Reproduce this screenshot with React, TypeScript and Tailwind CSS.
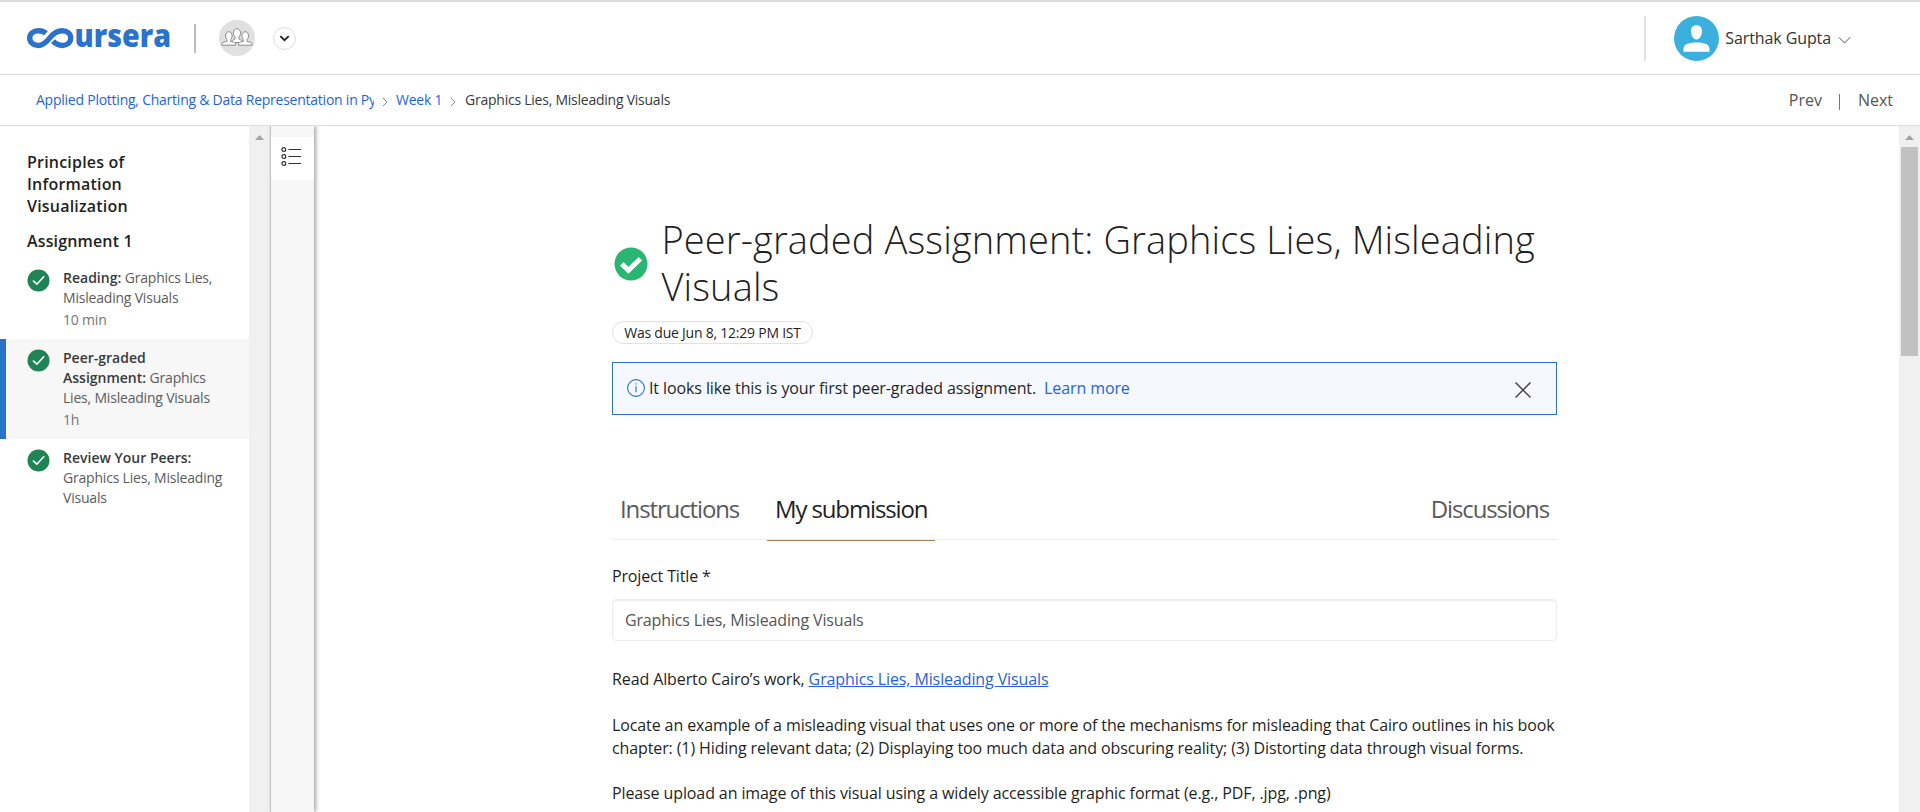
import React from "react";

function CourseraLogo() {
  return (
    <svg width="148" height="48" viewBox="26 12 148 48" className="block shrink-0 overflow-visible">
      <path
        d="M46 33.300C44 31.400 41.300 30.700 38.200 30.700C33.400 30.700 29.700 33.800 29.700 38C29.700 42.300 33.300 45.500 37.900 45.500C43 45.500 46.400 42.200 49.600 38.100C53 33.800 56.800 30.700 62.200 30.700C67.200 30.700 70.700 33.800 70.700 38C70.700 42.300 67.200 45.500 62.600 45.500C58.600 45.500 55.600 44 53 41.200"
        fill="none"
        stroke="#2a73cc"
        strokeWidth="5.400"
      />
      <text
        x="74.500"
        y="47.400"
        textLength="96.500"
        lengthAdjust="spacingAndGlyphs"
        fill="#2a73cc"
        className="font-['Open_Sans',sans-serif] text-[32px] font-extrabold"
      >
        ursera
      </text>
    </svg>
  );
}

function GroupIcon() {
  return (
    <svg width="32" height="20" viewBox="0 0 32 20" fill="#fff" stroke="#8a8a8a" strokeWidth="1" strokeLinejoin="round">
      <path d="M12.500 5C12.500 2.200 13.800 .8 16 .8S19.500 2.200 19.500 5C19.500 6.900 18.600 8.300 17.900 9V11C19 11.700 20.500 12 21 13V14.500H11V13C11.500 12 13 11.700 14.100 11V9C13.400 8.300 12.500 6.900 12.500 5Z" />
      <path d="M4.500 7.800C4.500 5.200 5.700 3.800 7.800 3.800S11.100 5.200 11.100 7.800C11.100 9.600 10.300 11 9.600 11.700V13.300C11.500 14 14 14 14.400 15.400V17.200H1V15.400C1.500 14 4.100 14 6 13.300V11.700C5.300 11 4.500 9.600 4.500 7.800Z" />
      <path d="M20.900 7.800C20.900 5.200 22.100 3.800 24.200 3.800S27.500 5.200 27.500 7.800C27.500 9.600 26.700 11 26 11.700V13.300C27.900 14 30.500 14 31 15.400V17.200H17.600V15.400C18 14 20.500 14 22.400 13.300V11.700C21.700 11 20.900 9.600 20.900 7.800Z" />
    </svg>
  );
}

function Avatar() {
  return (
    <svg width="45" height="45" viewBox="0 0 45 45" className="shrink-0">
      <circle cx="22.500" cy="22.500" r="22.500" fill="#3cb0dc" />
      <path
        fill="#fff"
        d="M22.500 9.300C26 9.300 28 11.600 28 15.300C28 19.600 25.500 23.600 22.500 23.600S17 19.600 17 15.300C17 11.600 19 9.300 22.500 9.300ZM9.500 35.800V33.200C9.500 28.400 14 26.400 22.500 26.400S35.500 28.400 35.500 33.200V35.800Z"
      />
    </svg>
  );
}

function Header() {
  return (
    <header className="flex h-[75px] shrink-0 items-start border-t-2 border-b border-t-[#dcdbe1] border-b-[#dedede]">
      <div className="ml-[26px] mt-[10px]">
        <CourseraLogo />
      </div>
      <div className="ml-[20px] mt-[22px] h-[29px] w-[2px] bg-[#bdbdbd]" />
      <div className="ml-[23px] mt-[18px] flex h-9 w-9 items-center justify-center rounded-full bg-[#e0e0e0]">
        <GroupIcon />
      </div>
      <div className="ml-[18px] mt-[25px] flex h-[23px] w-[23px] items-center justify-center rounded-full border border-[#dcdcdc]">
        <svg width="11" height="7" viewBox="0 0 11 7" fill="none" stroke="#222" strokeWidth="1.800">
          <path d="M1.300 1.200L5.500 5.200L9.700 1.200" />
        </svg>
      </div>
      <div className="ml-auto mt-[14px] flex">
        <div className="h-[45px] w-[2px] bg-[#e0e0e0]" />
        <div className="ml-[28px]">
          <Avatar />
        </div>
        <span className="ml-[6px] mt-[10px] text-base leading-6 tracking-[-0.1px] text-[#333]">Sarthak Gupta</span>
        <svg width="13" height="9" viewBox="0 0 13 9" className="ml-[7px] mr-[69px] mt-[20px]" fill="none" stroke="#555" strokeWidth="1">
          <path d="M.7 1.200L6.500 7L12.300 1.200" />
        </svg>
      </div>
    </header>
  );
}

function CrumbChevron() {
  return (
    <svg width="6" height="10" viewBox="0 0 6 10" fill="none" stroke="#888" strokeWidth="1" className="mt-1 shrink-0">
      <path d="M.8 .8L5 5L.8 9.200" />
    </svg>
  );
}

function Breadcrumbs() {
  return (
    <nav className="flex h-[51px] shrink-0 items-center border-b border-[#dedede] pl-9 pr-[27px] text-sm leading-5">
      <div className="flex items-center tracking-[-0.24px]">
        <a className="w-[338px] overflow-hidden whitespace-nowrap text-[#1f63e0]">
          Applied Plotting, Charting &amp; Data Representation in Py
        </a>
        <span className="ml-[8px]"><CrumbChevron /></span>
        <a className="ml-[8px] w-[46px] whitespace-nowrap text-[#1f63e0]">Week 1</a>
        <span className="ml-[8px]"><CrumbChevron /></span>
        <span className="ml-[9px] whitespace-nowrap text-[#373a3c]">Graphics Lies, Misleading Visuals</span>
      </div>
      <div className="ml-auto flex items-center text-base leading-6 text-[#555]">
        <span>Prev</span>
        <span className="ml-[17px] mr-[18px] mt-1 h-4 w-px bg-[#777]" />
        <span>Next</span>
      </div>
    </nav>
  );
}

function CheckCircle() {
  return (
    <svg width="23" height="23" viewBox="0 0 23 23" className="shrink-0">
      <circle cx="11.500" cy="11.500" r="11" fill="#1f8354" />
      <path d="M6 11.700L9.900 15.200L17.200 7.200" fill="none" stroke="#fff" strokeWidth="1.600" />
    </svg>
  );
}

type Lesson = { kind: string; lines: React.ReactNode; time?: string; active?: boolean };

const lessons: Lesson[] = [
  { kind: "Reading:", lines: <>Graphics Lies,<br />Misleading Visuals</>, time: "10 min" },
  { kind: "Peer-graded Assignment:", lines: <>Graphics<br />Lies, Misleading Visuals</>, time: "1h", active: true },
  { kind: "Review Your Peers:", lines: <>Graphics Lies, Misleading<br />Visuals</> },
];

function LessonItem({ kind, lines, time, active }: Lesson) {
  return (
    <li className={active ? "flex border-l-[6px] border-[#2a73cc] bg-[#f7f7f7] pl-[21px] pb-[9px] pt-[9px]" : "flex pl-[27px] pb-[9px] pt-[9px]"}>
      <div className="mt-px">
        <CheckCircle />
      </div>
      <div className="ml-[13px] w-[162px] text-sm leading-5 tracking-[-0.2px] text-[#5c5c5c]">
        <p>
          <b className="font-semibold tracking-normal text-[#373a3c]">{kind}</b> {lines}
        </p>
        {time && <p className="mt-[2px] text-[#757575]">{time}</p>}
      </div>
    </li>
  );
}

function ScrollArrow() {
  return (
    <svg width="9" height="5" viewBox="0 0 9 5" fill="#a3a3a3">
      <path d="M0 5L4.500 0L9 5Z" />
    </svg>
  );
}

function Sidebar() {
  return (
    <aside className="flex shrink-0">
      <div className="w-[249px]">
        <h2 className="ml-[27px] mt-[25px] w-[130px] text-base font-semibold leading-[22px] tracking-[0.2px] text-[#1f1f1f]">
          Principles of Information Visualization
        </h2>
        <h3 className="ml-[27px] mt-[13px] text-base font-semibold leading-[22px] tracking-[0.15px] text-[#1f1f1f]">Assignment 1</h3>
        <ul className="mt-[7px]">
          {lessons.map((l) => (
            <LessonItem key={l.kind} {...l} />
          ))}
        </ul>
      </div>
      <div className="flex w-[21px] justify-center bg-[#f0f0f0] pt-[9px]">
        <ScrollArrow />
      </div>
      <div className="w-[44px] border-l border-[#c4c4c4] bg-[#f6f6f6] pt-[11px] shadow-[2px_0_4px_0_rgba(0,0,0,0.35)]">
        <div className="flex h-[43px] justify-center bg-white pt-[10px]">
          <svg width="20" height="20" viewBox="0 0 20 20" fill="none" stroke="#333" strokeWidth="1.200" className="-ml-1">
            <circle cx="2.800" cy="2.500" r="1.900" />
            <circle cx="2.800" cy="9.500" r="1.900" />
            <circle cx="2.800" cy="16.500" r="1.900" />
            <path d="M7.500 2.500H20M7.500 9.500H20M7.500 16.500H20" strokeWidth="1" />
          </svg>
        </div>
      </div>
    </aside>
  );
}

function Main() {
  return (
    <main className="ml-[298px] w-[946px] text-base text-[#1f1f1f]">
      <div className="mt-[90px] flex items-start">
        <svg width="34" height="34" viewBox="0 0 34 34" className="ml-[2px] mt-[31px] shrink-0">
          <circle cx="17" cy="17" r="16.500" fill="#2ab573" />
          <path d="M7.800 16.900L14.400 23.300L26.400 11.700" fill="none" stroke="#fff" strokeWidth="5" />
        </svg>
        <h1 className="ml-[13.5px] whitespace-nowrap text-[38px] font-light leading-[47px] tracking-[0.12px]">
          Peer-graded Assignment: Graphics Lies, Misleading
          <br />
          Visuals
        </h1>
      </div>
      <div className="mt-[11px] flex h-[23px] w-[201px] items-center justify-center whitespace-nowrap rounded-full border border-[#e1e1e1] text-sm tracking-[-0.23px]">
        Was due Jun 8, 12:29 PM IST
      </div>
      <div className="mt-[18px] flex h-[53px] w-[945px] items-center border border-[#2a73cc] bg-[#f5f9ff] pl-[14px] pr-[25px]">
        <svg width="18" height="18" viewBox="0 0 18 18" fill="none" stroke="#2a73cc" className="-mt-px">
          <circle cx="9" cy="9" r="8.400" strokeWidth="1.100" />
          <path d="M9 7.300V13.300M9 4.300V5.600" strokeWidth="1.200" />
        </svg>
        <span className="-mt-0.5 ml-[4px] whitespace-nowrap tracking-[-0.1px]">It looks like this is your first peer-graded assignment.</span>
        <a className="-mt-0.5 ml-[8px] whitespace-nowrap tracking-[-0.1px] text-[#1f63e0]">Learn more</a>
        <svg width="16" height="16" viewBox="0 0 16 16" fill="none" stroke="#444" strokeWidth="1.500" className="ml-auto mt-[3px]">
          <path d="M.5 .5L15.500 15.500M15.500 .5L.5 15.500" />
        </svg>
      </div>
      <div className="mt-[74px] flex h-[51px] w-[945px] border-b border-[#eee] text-2xl leading-[39px] tracking-[-1.13px] text-[#5a5a5a]">
        <span className="w-[155px] pl-[8px]">Instructions</span>
        <span className="h-[52px] w-[168px] border-b border-[#a5804f] pl-[8px] text-[#1f1f1f]">My submission</span>
        <span className="ml-auto pr-[8px]">Discussions</span>
      </div>
      <label className="mt-[24px] block leading-6 tracking-[-0.15px]">Project Title *</label>
      <div className="mt-[11px] h-[42px] w-[945px] rounded-[4px] border border-[#ececec] pl-3 leading-[40px] tracking-[-0.15px] text-[#555] shadow-[inset_0_1px_1px_rgba(0,0,0,0.08)]">
        Graphics Lies, Misleading Visuals
      </div>
      <div className="mt-[27px] whitespace-nowrap leading-[23px] tracking-[-0.11px]">
        <p>
          Read Alberto Cairo’s work, <a className="text-[#1f63e0] underline">Graphics Lies, Misleading Visuals</a>
        </p>
        <p className="mt-[23px]">
          Locate an example of a misleading visual that uses one or more of the mechanisms for misleading that Cairo outlines in his book
          <br />
          chapter: (1) Hiding relevant data; (2) Displaying too much data and obscuring reality; (3) Distorting data through visual forms.
        </p>
        <p className="mt-[22px]">Please upload an image of this visual using a widely accessible graphic format (e.g., PDF, .jpg, .png)</p>
      </div>
    </main>
  );
}

export default function App() {
  return (
    <div className="flex h-[812px] w-[1920px] flex-col overflow-hidden bg-white font-['Open_Sans',sans-serif]">
      <Header />
      <Breadcrumbs />
      <div className="flex min-h-0 flex-1 overflow-hidden">
        <Sidebar />
        <Main />
        <div className="ml-auto flex w-[21px] flex-col items-center bg-[#f0f0f0] pt-[9px]">
          <ScrollArrow />
          <div className="mt-[7px] h-[209px] w-[17px] bg-[#c1c1c1]" />
        </div>
      </div>
    </div>
  );
}
